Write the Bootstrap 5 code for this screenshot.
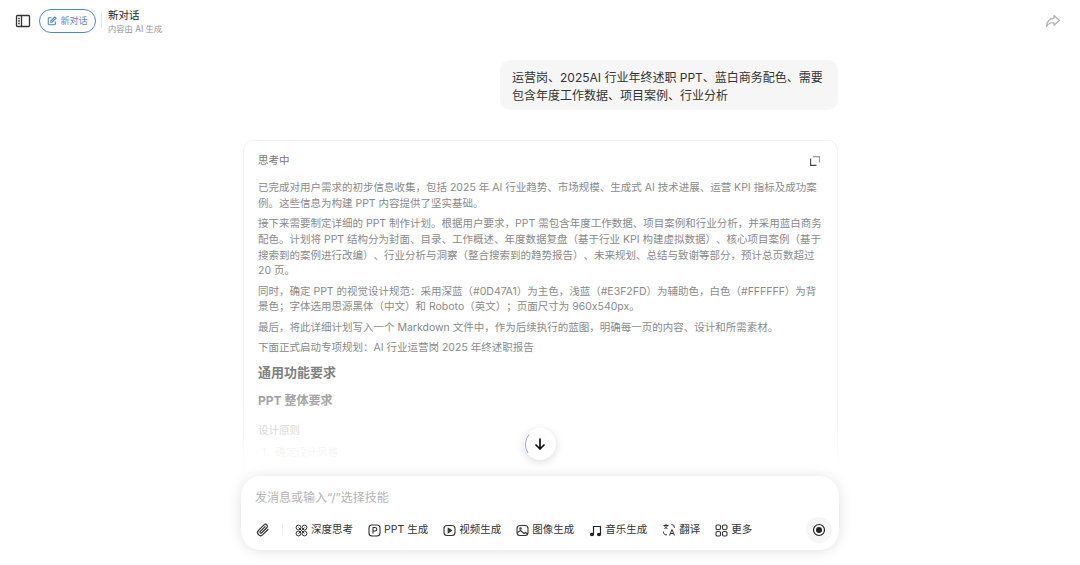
<!DOCTYPE html>
<html lang="zh-CN">
<head>
<meta charset="UTF-8">
<title>新对话</title>
<link href="https://cdn.jsdelivr.net/npm/bootstrap@5.3.0/dist/css/bootstrap.min.css" rel="stylesheet">
<style>
html, body { height: 100%; overflow: hidden; }
body { font-family: Inter, "Noto Sans CJK SC", sans-serif; background: #fff; color: #222; text-spacing-trim: space-all; }
svg { display: block; flex-shrink: 0; }
.page { height: 565px; }
.topbar { height: 40px; padding: 9px 19px 0 15px; }
.new-chat { height: 24px; width: 57px; border: 1px solid #4f86dc; border-radius: 12px; color: #5a86d4; font-size: 9px; margin-left: 8px; gap: 3px; }
.top-sep { width: 1px; height: 15px; background: #e4e4e4; margin: 0 6px 0 5px; }
.top-title { font-size: 10.5px; line-height: 14px; color: #222; }
.top-sub { font-size: 8.3px; line-height: 13px; color: #999; }
.chat-area { flex: 1 1 0; min-height: 0; overflow: hidden; }
.chat-col { width: 598px; }
.bubble { width: 338px; margin: 20px 1px 0 0; padding: 9px 12px 5px; background: #f6f6f6; border-radius: 10px; font-size: 12px; line-height: 18px; color: #333; }
.think-card { margin: 30px 1px 0 2px; height: 400px; padding: 12px 14px; border: 1px solid #f0f0f0; border-radius: 10px; }
.think-head { font-size: 10.5px; line-height: 15px; color: #777; margin-bottom: 12px; padding-right: 3px; }
.think-body { font-size: 10.5px; line-height: 15.8px; color: #8a8a8a; }
.think-body p { margin: 0 0 4.4px; }
.think-body h5 { font-size: 13px; line-height: 20px; font-weight: 700; color: #808080; margin: 6px 0 0; }
.think-body h6 { font-size: 12px; line-height: 18px; font-weight: 700; color: #a0a0a0; margin: 10px 0 0; }
.fade-part { color: #bbb; margin: 13px 0 0 !important; }
.fade-last { color: #ddd; margin: 7px 0 0 4px !important; }
.fade-cover { left: 0; right: 0; bottom: 0; height: 80px; background: linear-gradient(to bottom, rgba(255,255,255,0), #fff 100%); }
.down-btn { left: 524px; top: 388px; width: 32px; height: 32px; background: #fff; box-shadow: 0 2px 8px rgba(0,0,0,.14); }
.down-arc { left: 0; top: 0; }
.composer { width: 598px; height: 74px; margin-bottom: 15px; padding: 13px 14px 0; border-radius: 20px; background: #fff; box-shadow: 0 1px 14px rgba(0,0,0,.12); position: relative; }
.composer-hint { font-size: 12px; line-height: 18px; color: #b5b5b5; margin-bottom: 11px; }
.tool-row { font-size: 10.5px; color: #333; height: 24px; }
.tool-item { gap: 3px; margin-right: 15px; white-space: nowrap; }
.tool-sep { width: 1px; height: 12px; background: #eee; margin: 0 12px 0 11px; }
.stop-btn { width: 26px; height: 26px; background: #f6f6f6; margin-right: -7px; }
</style>
</head>
<body>
<div class="page d-flex flex-column">

    <!-- top bar -->
    <div class="topbar d-flex align-items-start">
        <svg class="mt-1" width="16" height="16" viewBox="0 0 16 16" fill="none" stroke="#333" stroke-width="1.3"><rect x="1.5" y="2.5" width="13" height="11" rx="1"/><path d="M6.5 2.5v11M3.2 5.500h1.600M3.2 8h1.600M3.2 10.500h1.600"/></svg>
        <div class="new-chat d-flex align-items-center justify-content-center">
            <svg width="10" height="10" viewBox="0 0 12 12" fill="none" stroke="#4f7fd0" stroke-width="1.3"><path d="M10 6.500v3a1 1 0 0 1-1 1H2.500a1 1 0 0 1-1-1V3a1 1 0 0 1 1-1h3"/><path d="M4.500 7.500l.3-1.800L9.300 1.200l1.500 1.500-4.500 4.500z"/></svg>
            <span>新对话</span>
        </div>
        <div class="top-sep mt-1"></div>
        <div>
            <div class="top-title">新对话</div>
            <div class="top-sub">内容由 AI 生成</div>
        </div>
        <svg class="ms-auto mt-1" width="16" height="16" viewBox="0 0 16 16" fill="none" stroke="#b0b0b0" stroke-width="1.2" stroke-linejoin="round"><path d="M9 2.500l5.500 5-5.500 4.800V9.500C6 9.300 3.500 10.500 1.500 13.500 2 8.500 5 5.500 9 5.200z"/></svg>
    </div>

    <!-- chat -->
    <div class="chat-area position-relative">
        <div class="chat-col mx-auto">
            <div class="d-flex justify-content-end">
                <div class="bubble">运营岗、2025AI 行业年终述职 PPT、蓝白商务配色、需要包含年度工作数据、项目案例、行业分析</div>
            </div>
            <div class="think-card">
                <div class="think-head d-flex justify-content-between align-items-center">
                    <span>思考中</span>
                    <svg width="10" height="10" viewBox="0 0 10 10" fill="none" stroke="#444" stroke-width="1.1"><path d="M.6 2.500v6.900H6.500"/><path d="M3 .6h6.400V6.500" stroke="#999"/></svg>
                </div>
                <div class="think-body">
                    <p>已完成对用户需求的初步信息收集，包括 2025 年 AI 行业趋势、市场规模、生成式 AI 技术进展、运营 KPI 指标及成功案例。这些信息为构建 PPT 内容提供了坚实基础。</p>
                    <p>接下来需要制定详细的 PPT 制作计划。根据用户要求，PPT 需包含年度工作数据、项目案例和行业分析，并采用蓝白商务配色。计划将 PPT 结构分为封面、目录、工作概述、年度数据复盘（基于行业 KPI 构建虚拟数据）、核心项目案例（基于搜索到的案例进行改编）、行业分析与洞察（整合搜索到的趋势报告）、未来规划、总结与致谢等部分，预计总页数超过 20 页。</p>
                    <p>同时，确定 PPT 的视觉设计规范：采用深蓝（#0D47A1）为主色，浅蓝（#E3F2FD）为辅助色，白色（#FFFFFF）为背景色；字体选用思源黑体（中文）和 Roboto（英文）；页面尺寸为 960x540px。</p>
                    <p>最后，将此详细计划写入一个 Markdown 文件中，作为后续执行的蓝图，明确每一页的内容、设计和所需素材。</p>
                    <p>下面正式启动专项规划：AI 行业运营岗 2025 年终述职报告</p>
                    <h5>通用功能要求</h5>
                    <h6>PPT 整体要求</h6>
                    <p class="fade-part">设计原则</p>
                    <p class="fade-last">1.&nbsp; 确定设计风格</p>
                </div>
            </div>
        </div>
        <div class="fade-cover position-absolute"></div>
        <div class="down-btn position-absolute rounded-circle d-flex align-items-center justify-content-center">
            <svg class="down-arc position-absolute" width="32" height="32" viewBox="0 0 32 32" fill="none" stroke="#7fa6e8" stroke-width="1"><path d="M5 6.500A15.500 15.500 0 0 0 4 25"/></svg>
            <svg width="14" height="14" viewBox="0 0 14 14" fill="none" stroke="#111" stroke-width="1.700" stroke-linecap="round" stroke-linejoin="round"><path d="M7 2v10M3 8l4 4 4-4"/></svg>
        </div>
    </div>

    <!-- composer -->
    <div class="composer mx-auto flex-shrink-0">
        <div class="composer-hint">发消息或输入“/”选择技能</div>
        <div class="tool-row d-flex align-items-center">
            <svg width="16" height="16" viewBox="0 0 16 16" fill="none" stroke="#333" stroke-width="1.200" stroke-linecap="round"><path d="M13 7.500l-5.200 5.200a3 3 0 0 1-4.300-4.300l5.700-5.700a2 2 0 0 1 2.800 2.800L6.500 11a1 1 0 0 1-1.400-1.400l5-5"/></svg>
            <div class="tool-sep"></div>
            <div class="tool-item d-flex align-items-center">
                <svg width="13" height="13" viewBox="0 0 13 13" fill="none" stroke="#333" stroke-width="1"><circle cx="3.500" cy="3.500" r="2.400"/><circle cx="9.500" cy="3.500" r="2.400"/><circle cx="3.500" cy="9.500" r="2.400"/><circle cx="9.500" cy="9.500" r="2.400"/><path d="M3.500 3.500l6 6M9.500 3.500l-6 6"/></svg>
                <span>深度思考</span>
            </div>
            <div class="tool-item d-flex align-items-center">
                <svg width="13" height="13" viewBox="0 0 13 13" fill="none" stroke="#333" stroke-width="1.100"><rect x="1" y="1" width="11" height="11" rx="3"/><path d="M5 9.500v-6h2a1.700 1.700 0 0 1 0 3.500H5"/></svg>
                <span>PPT 生成</span>
            </div>
            <div class="tool-item d-flex align-items-center">
                <svg width="13" height="13" viewBox="0 0 13 13" fill="none" stroke="#333" stroke-width="1.100"><rect x="1" y="1.500" width="11" height="10" rx="3"/><path d="M5.200 4.300l3.300 2.200-3.300 2.200z" fill="#333"/></svg>
                <span>视频生成</span>
            </div>
            <div class="tool-item d-flex align-items-center">
                <svg width="13" height="13" viewBox="0 0 13 13" fill="none" stroke="#333" stroke-width="1.100"><rect x="1" y="1.500" width="11" height="10" rx="3"/><path d="M1.500 8.500l3-2 3.500 3 1.500-1 2 1.500"/><circle cx="4.500" cy="4.500" r=".8"/></svg>
                <span>图像生成</span>
            </div>
            <div class="tool-item d-flex align-items-center">
                <svg width="13" height="13" viewBox="0 0 13 13" fill="none" stroke="#222" stroke-width="1.200"><path d="M4.500 10.500V2.500h7v8"/><ellipse cx="3" cy="10.500" rx="1.500" ry="1.100" fill="#222"/><ellipse cx="10" cy="10.500" rx="1.500" ry="1.100" fill="#222"/></svg>
                <span>音乐生成</span>
            </div>
            <div class="tool-item d-flex align-items-center">
                <svg width="14" height="14" viewBox="0 0 14 14" fill="none" stroke="#333" stroke-width="1"><path d="M1.500 2.500h5M4 1v1.500M2.500 5.500c1.500-.5 2.500-1.500 3-3M2.500 3c.5 1.200 1.500 2 3 2.500M9.500 1.500a3 3 0 0 1 3 3l-1-.8M1.500 8.500a3 3 0 0 0 3 3.500l-1-1"/><path d="M7.500 12.500l2.500-6 2.500 6M8.400 10.500h3.200"/></svg>
                <span>翻译</span>
            </div>
            <div class="tool-item d-flex align-items-center">
                <svg width="13" height="13" viewBox="0 0 13 13" fill="none" stroke="#333" stroke-width="1.100"><rect x="1" y="1" width="4.500" height="4.500" rx="1.200"/><rect x="7.500" y="1" width="4.500" height="4.500" rx="1.200"/><rect x="1" y="7.500" width="4.500" height="4.500" rx="1.200"/><rect x="7.500" y="7.500" width="4.500" height="4.500" rx="1.200"/></svg>
                <span>更多</span>
            </div>
            <div class="stop-btn ms-auto rounded-circle d-flex align-items-center justify-content-center">
                <svg width="14" height="14" viewBox="0 0 14 14" fill="none"><circle cx="7" cy="7" r="5.500" stroke="#222" stroke-width="1.200"/><circle cx="7" cy="7" r="3" fill="#222"/></svg>
            </div>
        </div>
    </div>
</div>
<script src="https://cdn.jsdelivr.net/npm/bootstrap@5.3.0/dist/js/bootstrap.bundle.min.js"></script>
</body>
</html>
